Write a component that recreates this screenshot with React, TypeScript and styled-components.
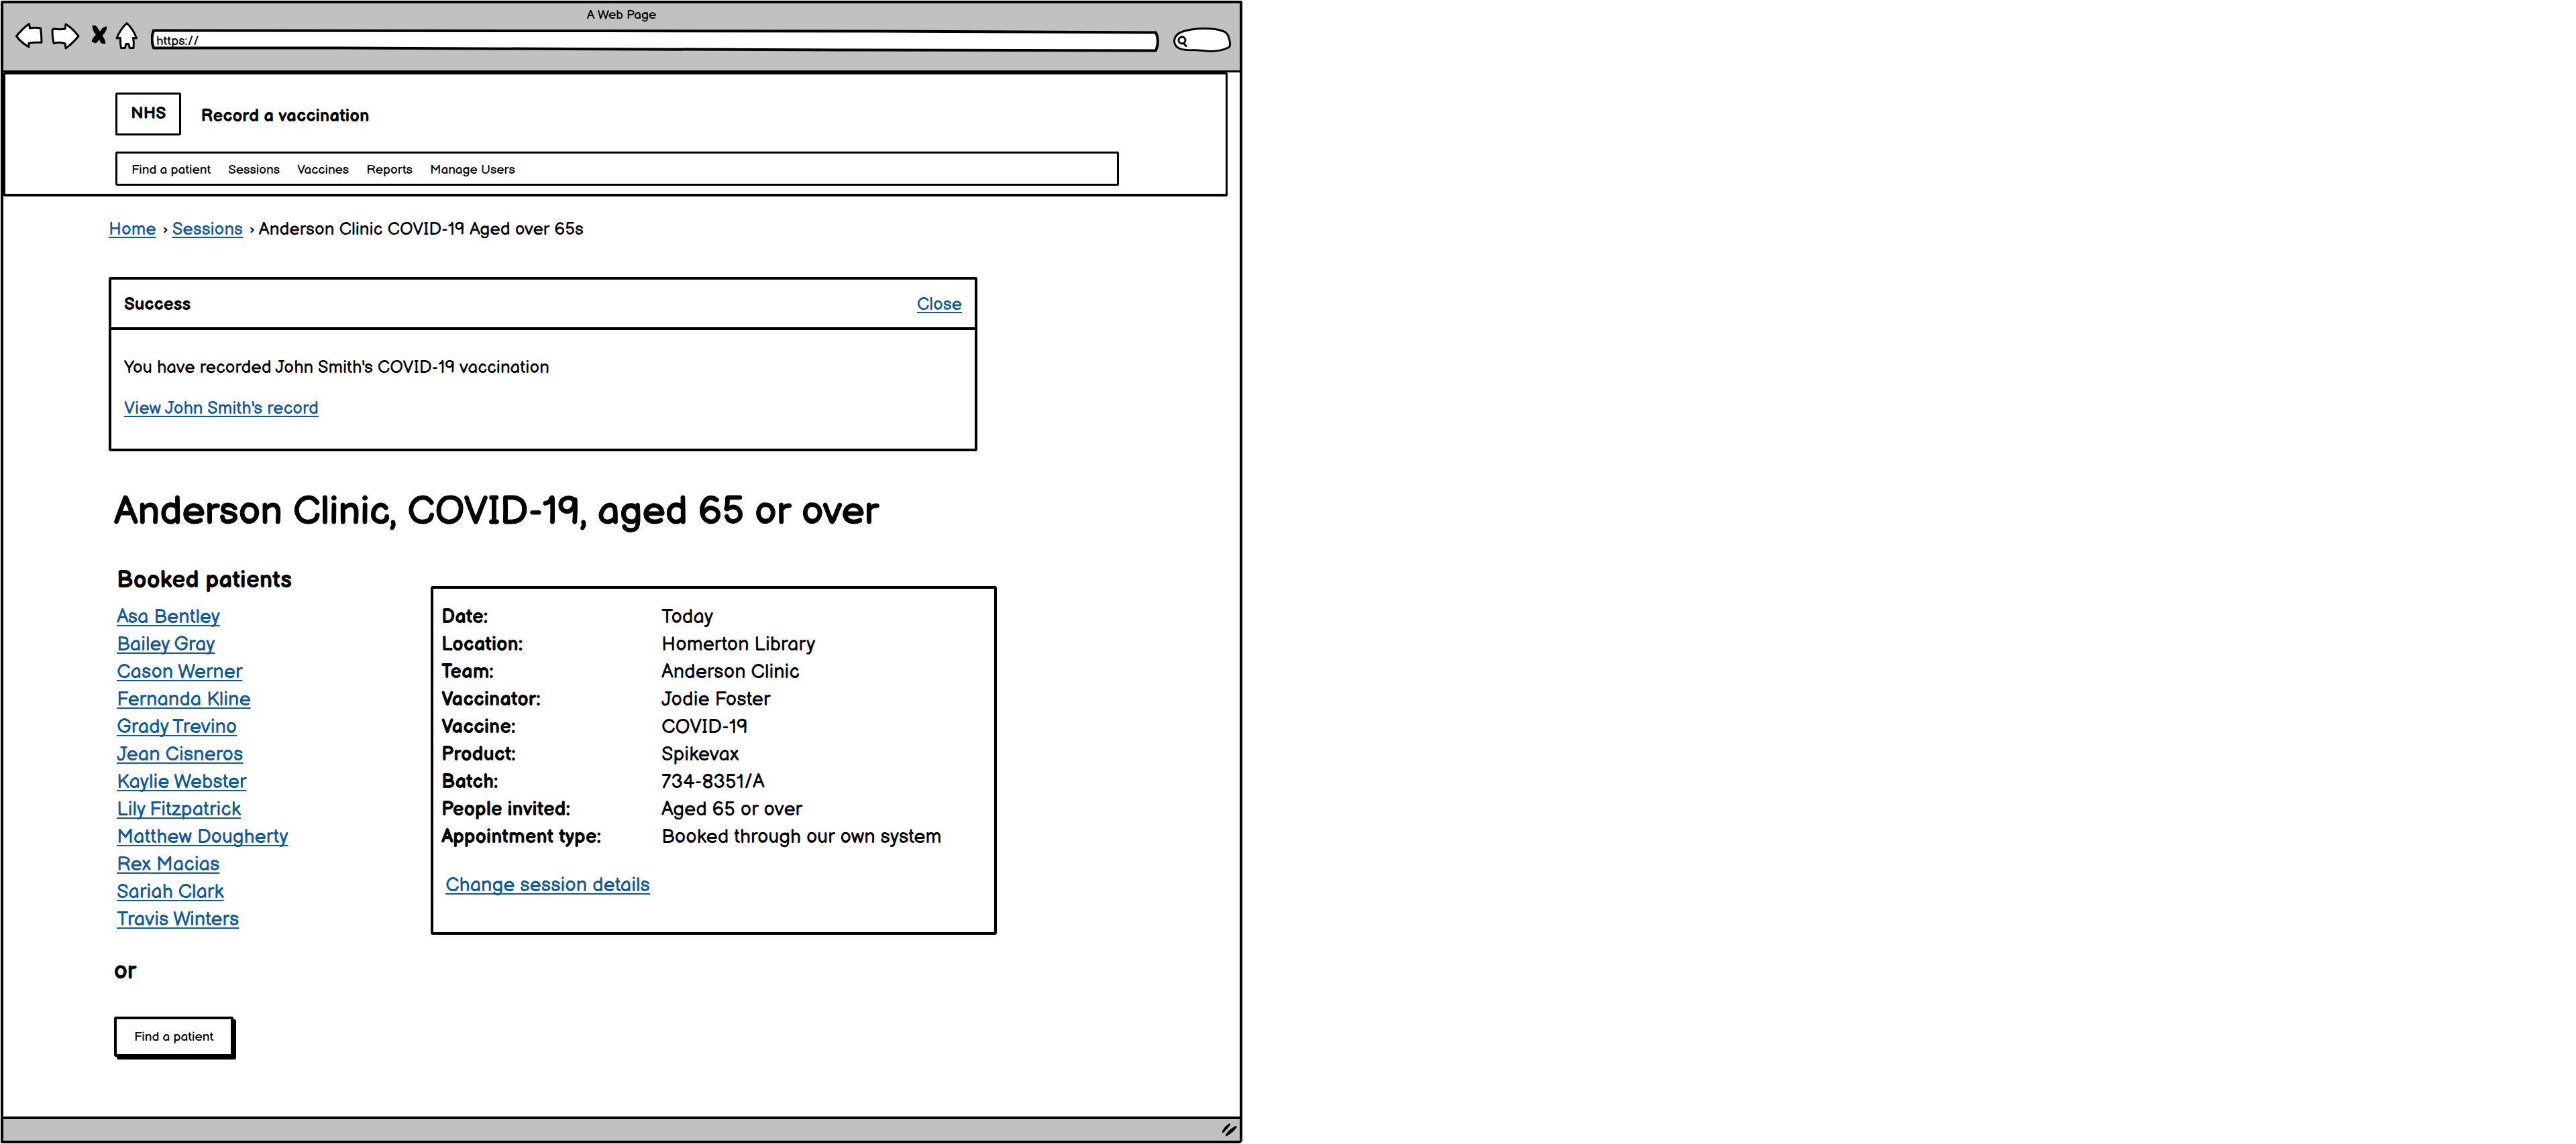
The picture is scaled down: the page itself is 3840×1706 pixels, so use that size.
import React from "react";
import styled, { createGlobalStyle } from "styled-components";

const ink = "#000";
const chromeGrey = "#c1c1c1";
const linkBlue = "#10599b";

const GlobalStyle = createGlobalStyle`
  * { box-sizing: border-box; }
  body { margin: 0; background: #fff; }
  body, button, input, table {
    font-family: "Balsamiq Sans", "Liberation Sans", Arial, sans-serif;
    color: ${ink};
  }
`;

const Page = styled.div`
  display: flex;
  min-height: 100vh;
  padding: 1px;
`;

const BrowserWindow = styled.div`
  display: flex;
  flex-direction: column;
  flex: 1;
  max-width: 1851px;
  border: 4px solid ${ink};
  border-radius: 2px 2px 5px 2px;
  background: #fff;
`;

const Chrome = styled.div`
  padding: 8px 12px 25px 17px;
  background: ${chromeGrey};
  border-bottom: 3px solid ${ink};
`;

const WindowTitle = styled.div`
  margin-right: 5px;
  font-size: 19px;
  line-height: 19px;
  text-align: center;
`;

const Toolbar = styled.div`
  display: flex;
  gap: 18px;
`;

const ToolGroup = styled.div`
  display: flex;
  gap: 10px;
`;

const ToolButton = styled.button`
  display: flex;
  padding: 0;
  border: 0;
  background: none;
  cursor: pointer;
`;

const Field = styled.div<{ $search?: boolean }>`
  position: relative;
  height: 48px;
  flex: ${(p) => (p.$search ? "0 0 90px" : "1 1 0")};
`;

const FieldSketch = styled.svg`
  position: absolute;
  inset: 0;
  width: 100%;
  height: 100%;
`;

const FieldInput = styled.input<{ $inset: number }>`
  position: relative;
  display: block;
  width: 100%;
  height: 48px;
  padding: 10px 12px 0 ${(p) => p.$inset}px;
  border: 0;
  outline: 0;
  background: transparent;
  font-size: 19px;
`;

const SiteHeader = styled.header`
  margin-right: 18px;
  padding: 27px 159px 12px 164px;
  border: 3px solid ${ink};
  border-bottom-width: 4px;
  border-radius: 2px;
`;

const Brand = styled.div`
  display: flex;
  align-items: center;
  gap: 29px;
  margin-bottom: 24px;
  font-size: 26px;
  font-weight: 700;
`;

const Logo = styled.div`
  padding: 17px 20px;
  border: 3px solid ${ink};
  border-radius: 3px 2px 3px 2px;
  font-size: 25px;
  line-height: 24px;
`;

const ServiceName = styled.span`
  padding-top: 6px;
`;

const Nav = styled.nav`
  display: flex;
  gap: 26px;
  padding: 13px 21px 9px;
  border: 3px solid ${ink};
  border-radius: 3px 2px 2px 3px;
  font-size: 19px;
  line-height: 23px;
`;

const NavLink = styled.a`
  color: ${ink};
  text-decoration: none;
`;

const Main = styled.main`
  flex: 1;
  padding: 35px 157px 80px;
`;

const Link = styled.a`
  color: ${linkBlue};
  text-decoration: underline;
  text-decoration-thickness: 2px;
  text-decoration-skip-ink: none;
  text-underline-offset: 3px;
`;

const Breadcrumb = styled.nav`
  margin-bottom: 55px;
  font-size: 26px;
  line-height: 30px;
`;

const Separator = styled.span`
  margin: 0 6px 0 10px;
`;

const Banner = styled.section`
  max-width: 1295px;
  border: 4px solid ${ink};
  border-radius: 3px;
  font-size: 26px;
  line-height: 30px;
`;

const BannerHead = styled.div`
  display: flex;
  justify-content: space-between;
  align-items: center;
  padding: 23px 19px 18px;
  border-bottom: 4px solid ${ink};
`;

const BannerTitle = styled.h2`
  margin: 0;
  font-size: 26px;
`;

const BannerBody = styled.div`
  display: flex;
  flex-direction: column;
  align-items: flex-start;
  gap: 31px;
  padding: 42px 19px 44px;
`;

const Text = styled.p`
  margin: 0;
`;

const Session = styled.section`
  padding: 59px 0 0 8px;
`;

const PageTitle = styled.h1`
  margin: 0 0 50px;
  font-size: 58px;
  font-weight: 400;
  line-height: 64px;
  -webkit-text-stroke: 1px ${ink};
`;

const Columns = styled.div`
  display: grid;
  grid-template-columns: 468px minmax(0, 844px);
  align-items: start;
  padding-left: 4px;
`;

const SectionTitle = styled.h2`
  margin: 0 0 14px;
  font-size: 35px;
  line-height: 40px;
`;

const PatientList = styled.ul`
  margin: 0;
  padding: 0;
  list-style: none;
  font-size: 29px;
  line-height: 41px;
`;

const Details = styled.div`
  margin-top: 28px;
  padding: 22px 12px 49px;
  border: 4px solid ${ink};
  border-radius: 3px;
  font-size: 29px;
  line-height: 41px;
`;

const DetailsTable = styled.table`
  margin-bottom: 31px;
  border-collapse: collapse;

  th {
    width: 328px;
    padding: 0;
    text-align: left;
  }
  td {
    padding: 0;
  }
`;

const DetailsAction = styled.div`
  padding-left: 6px;
`;

const Or = styled.p`
  margin: 34px 0 46px;
  font-size: 35px;
  line-height: 42px;
  -webkit-text-stroke: 1px ${ink};
`;

const FindButton = styled.button`
  padding: 17px 26px 15px;
  border: 4px solid ${ink};
  border-radius: 3px;
  background: #fff;
  box-shadow: 4px 4px 0 ${ink};
  font-size: 19px;
  line-height: 20px;
  cursor: pointer;
`;

const StatusBar = styled.footer`
  display: flex;
  justify-content: flex-end;
  align-items: center;
  height: 36px;
  padding-right: 2px;
  border-top: 4px solid ${ink};
  background: ${chromeGrey};
`;

const patients = [
  "Asa Bentley",
  "Bailey Gray",
  "Cason Werner",
  "Fernanda Kline",
  "Grady Trevino",
  "Jean Cisneros",
  "Kaylie Webster",
  "Lily Fitzpatrick",
  "Matthew Dougherty",
  "Rex Macias",
  "Sariah Clark",
  "Travis Winters",
];

const details = [
  ["Date:", "Today"],
  ["Location:", "Homerton Library"],
  ["Team:", "Anderson Clinic"],
  ["Vaccinator:", "Jodie Foster"],
  ["Vaccine:", "COVID-19"],
  ["Product:", "Spikevax"],
  ["Batch:", "734-8351/A"],
  ["People invited:", "Aged 65 or over"],
  ["Appointment type:", "Booked through our own system"],
];

const navItems = ["Find a patient", "Sessions", "Vaccines", "Reports", "Manage Users"];

const outline = {
  fill: "#fff",
  stroke: ink,
  strokeWidth: 3,
  strokeLinejoin: "round" as const,
  strokeLinecap: "round" as const,
};

const tools = [
  {
    label: "Back",
    x: 22,
    width: 44,
    shape: <path {...outline} d="M24.5 54Q33 43 43.500 35.500L44.500 42Q53 40.500 60.500 42Q62 53 62 63.500Q53 62.500 43 64.500L43 70Q32 64 24.500 54Z" />,
  },
  {
    label: "Forward",
    x: 76,
    width: 44,
    shape: <path {...outline} d="M78 46Q78 43 81 43Q89 44.500 97 43L98 36Q109 43 117 54Q108 65 98 72L97 65Q88 62.500 80 64.500Q78 55 78 46Z" />,
  },
  {
    label: "Stop",
    x: 130,
    width: 31,
    shape: <path fill={ink} d="M137.500 38Q142 37 144.500 40L149 47Q153 39 159.500 39.500Q158.500 48 152.500 53Q156.500 58 157.500 65Q153 66 150.500 64L147.500 59Q145 64 142 64.500L136.500 62Q138 56 143 52Q138 46 137.500 38Z" />,
  },
  {
    label: "Home",
    x: 171,
    width: 36,
    shape: <path {...outline} d="M189 34.500Q199 44 203.500 57L198.500 56.500Q200 64 199 71.500L193 71.500Q193 68 191.500 65.500L188 65.500Q187 68 186.500 71.500L180.500 71.500Q179 64 179.500 56.500L174 57Q179 44 189 34.500Z" />,
  },
];

export default function App() {
  return (
    <>
      <GlobalStyle />
      <Page>
        <BrowserWindow>
          <Chrome>
            <WindowTitle>A Web Page</WindowTitle>
            <Toolbar>
              <ToolGroup>
                {tools.map((tool) => (
                  <ToolButton key={tool.label} type="button" aria-label={tool.label}>
                    <svg width={tool.width} height="48" viewBox={`${tool.x} 32 ${tool.width} 48`}>
                      {tool.shape}
                    </svg>
                  </ToolButton>
                ))}
              </ToolGroup>
              <Field>
                <FieldSketch viewBox="224 32 1504 48" preserveAspectRatio="none" aria-hidden="true">
                  <path
                    {...outline}
                    strokeWidth={4}
                    vectorEffect="non-scaling-stroke"
                    d="M228 45.500L900 46L1300 46.500L1723 48.500Q1729 61 1723 75.500L1250 74.500L850 73L500 71.500L228 71.500Q223 58 228 45.500Z"
                  />
                </FieldSketch>
                <FieldInput $inset={8} aria-label="Address" defaultValue="https://" />
              </Field>
              <Field $search>
                <FieldSketch viewBox="1746 32 90 48" aria-hidden="true">
                  <path
                    {...outline}
                    d="M1750.500 61Q1751 50 1766.500 46Q1780 42.500 1795 42.500Q1812 42.500 1822 46Q1831 48 1833 61Q1835 69 1831 71Q1820 76.500 1803 76.500Q1786 74.500 1770 74.500Q1751 74 1750.500 61Z"
                  />
                  <circle {...outline} cx="1762" cy="60" r="5" />
                  <path {...outline} d="M1764.500 64.500L1768 68.500" />
                </FieldSketch>
                <FieldInput $inset={26} type="text" aria-label="Search" />
              </Field>
            </Toolbar>
          </Chrome>

          <SiteHeader>
            <Brand>
              <Logo>NHS</Logo>
              <ServiceName>Record a vaccination</ServiceName>
            </Brand>
            <Nav aria-label="Main">
              {navItems.map((item) => (
                <NavLink key={item} href="#">
                  {item}
                </NavLink>
              ))}
            </Nav>
          </SiteHeader>

          <Main>
            <Breadcrumb aria-label="Breadcrumb">
              <Link href="#">Home</Link>
              <Separator>›</Separator>
              <Link href="#">Sessions</Link>
              <Separator>›</Separator>
              <span>Anderson Clinic COVID-19 Aged over 65s</span>
            </Breadcrumb>

            <Banner>
              <BannerHead>
                <BannerTitle>Success</BannerTitle>
                <Link href="#">Close</Link>
              </BannerHead>
              <BannerBody>
                <Text>You have recorded John Smith's COVID-19 vaccination</Text>
                <Link href="#">View John Smith's record</Link>
              </BannerBody>
            </Banner>

            <Session>
              <PageTitle>Anderson Clinic, COVID-19, aged 65 or over</PageTitle>
              <Columns>
                <div>
                  <SectionTitle>Booked patients</SectionTitle>
                  <PatientList>
                    {patients.map((name) => (
                      <li key={name}>
                        <Link href="#">{name}</Link>
                      </li>
                    ))}
                  </PatientList>
                </div>
                <Details>
                  <DetailsTable>
                    <tbody>
                      {details.map(([label, value]) => (
                        <tr key={label}>
                          <th scope="row">{label}</th>
                          <td>{value}</td>
                        </tr>
                      ))}
                    </tbody>
                  </DetailsTable>
                  <DetailsAction>
                    <Link href="#">Change session details</Link>
                  </DetailsAction>
                </Details>
              </Columns>
              <Or>or</Or>
              <FindButton type="button">Find a patient</FindButton>
            </Session>
          </Main>

          <StatusBar>
            <svg width="26" height="22" viewBox="0 0 26 22" aria-hidden="true">
              <path d="M2 13Q5 6 13 1Q15 2 13 5Q9 10 4 15Q1 16 2 13ZM7 18Q12 10 22 5Q25 5 23 8Q18 15 9 20Q6 21 7 18Z" fill={ink} />
            </svg>
          </StatusBar>
        </BrowserWindow>
      </Page>
    </>
  );
}
